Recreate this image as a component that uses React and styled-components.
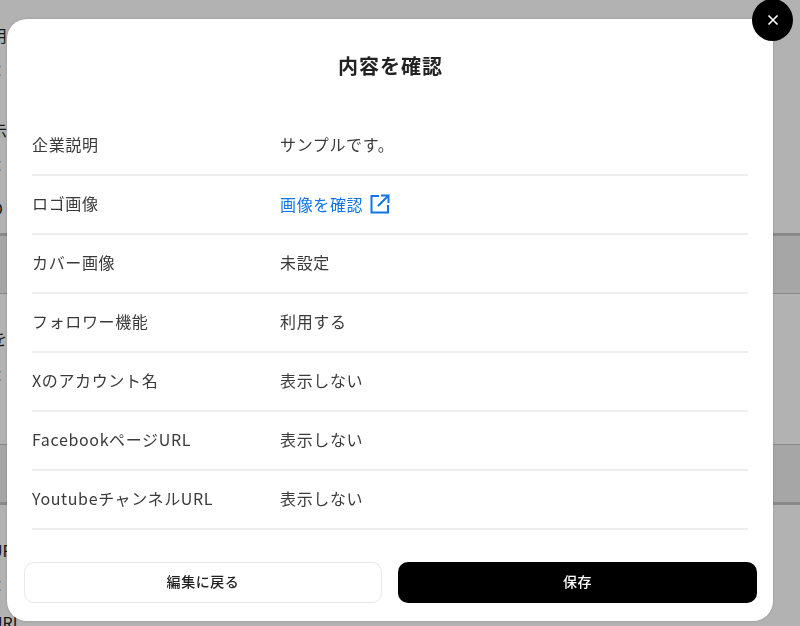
import React from "react";
import styled, { createGlobalStyle } from "styled-components";

const Global = createGlobalStyle`
  html, body { margin: 0; padding: 0; height: 100%; overflow: hidden; }
  body { background: #fff; font-family: "Noto Sans CJK JP", "Noto Sans", sans-serif; color: #333; }
`;

const Page = styled.div`
  height: 626px;
  overflow: hidden;
  display: flex;
  flex-direction: column;
`;
const PageRow = styled.div`
  flex: none;
  height: ${(p) => p.$h}px;
  display: flex;
  flex-direction: column;
  justify-content: ${(p) => (p.$pad ? "flex-start" : "center")};
  gap: 17px;
  padding-top: ${(p) => p.$pad ?? 0}px;
  font-size: 16px;
  line-height: 20px;
  background: ${(p) => (p.$band ? "#eeeeee" : "transparent")};
  border-top: ${(p) => p.$top ?? 0}px solid #c4c4c4;
  border-bottom: ${(p) => p.$bottom ?? 0}px solid #c4c4c4;
  box-sizing: border-box;
`;
const PageText = styled.span`
  margin-left: -9px;
  white-space: nowrap;
  color: #222;
`;

const Overlay = styled.div`
  position: fixed;
  inset: 0;
  background: rgba(0, 0, 0, 0.3);
`;
const Modal = styled.div`
  position: fixed;
  left: 7px;
  top: 19px;
  width: 766px;
  height: 602px;
  box-sizing: border-box;
  background: #fff;
  border-radius: 20px;
  box-shadow: 0 0 3px rgba(0, 0, 0, 0.18);
  display: flex;
  flex-direction: column;
  padding: 31px 16px 18px 17px;
`;
const Title = styled.h2`
  margin: 0;
  height: 32px;
  font-size: 20px;
  line-height: 32px;
  font-weight: 700;
  letter-spacing: 0.05em;
  color: #222;
  text-align: center;
`;
const List = styled.dl`
  margin: 35px 0 0;
  padding: 0 9px 0 8px;
  flex: 1;
`;
const Row = styled.div`
  height: 59px;
  box-sizing: border-box;
  display: flex;
  align-items: center;
  border-bottom: 2px solid #eeeeee;
  padding-bottom: 4px;
  font-size: 16px;
  line-height: 24px;
  letter-spacing: 0.04em;
  color: #3a3a3a;
`;
const Label = styled.dt`
  width: 248px;
  flex: none;
`;
const Value = styled.dd`
  margin: 0;
`;
const LinkValue = styled.a`
  display: inline-flex;
  align-items: center;
  gap: 7px;
  padding-top: 2px;
  color: #0f75e8;
  text-decoration: none;
`;
const Actions = styled.div`
  display: flex;
  gap: 16px;
`;
const Button = styled.button`
  flex: none;
  width: ${(p) => p.$w}px;
  height: 41px;
  box-sizing: border-box;
  border-radius: 10px;
  padding: 0 0 3px;
  font: 500 14px/20px "Noto Sans CJK JP", sans-serif;
  letter-spacing: 0.04em;
  border: ${(p) => (p.$primary ? "none" : "1px solid #e8e8e8")};
  background: ${(p) => (p.$primary ? "#000" : "#fff")};
  color: ${(p) => (p.$primary ? "#fff" : "#222")};
`;
const Close = styled.button`
  position: fixed;
  left: 752px;
  top: -1px;
  width: 41px;
  height: 42px;
  border: none;
  border-radius: 50%;
  background: #000;
  padding: 0;
  display: flex;
  align-items: center;
  justify-content: center;
`;

const rows = [
  ["企業説明", "サンプルです。"],
  ["ロゴ画像", null],
  ["カバー画像", "未設定"],
  ["フォロワー機能", "利用する"],
  ["Xのアカウント名", "表示しない"],
  ["FacebookページURL", "表示しない"],
  ["YoutubeチャンネルURL", "表示しない"],
];

export default function App() {
  return (
    <>
      <Global />
      <Page>
        <PageRow $h={25} />
        <PageRow $h={20}><PageText>用</PageText></PageRow>
        <PageRow $h={50}><PageText>：</PageText></PageRow>
        <PageRow $h={25} />
        <PageRow $h={20}><PageText>示</PageText></PageRow>
        <PageRow $h={50}><PageText>：</PageText></PageRow>
        <PageRow $h={36}><PageText>O</PageText></PageRow>
        <PageRow $h={7} />
        <PageRow $h={61} $band $top={3} $bottom={1} />
        <PageRow $h={150} $pad={34}>
          <PageText>を</PageText>
          <PageText>：</PageText>
        </PageRow>
        <PageRow $h={61} $band $top={1} $bottom={3} />
        <PageRow $h={35} />
        <PageRow $h={20}><PageText>URL</PageText></PageRow>
        <PageRow $h={15} />
        <PageRow $h={20}><PageText>：</PageText></PageRow>
        <PageRow $h={17} />
        <PageRow $h={20}><PageText>URL</PageText></PageRow>
      </Page>
      <Overlay />
      <Modal>
        <Title>内容を確認</Title>
        <List>
          {rows.map(([label, value]) => (
            <Row key={label}>
              <Label>{label}</Label>
              <Value>
                {value ?? (
                  <LinkValue href="#">
                    画像を確認
                    <svg width="20" height="20" viewBox="0 0 20 20" fill="none" stroke="#0f75e8" strokeWidth="2">
                      <path d="M9 2H1.5v16.5H18V11" />
                      <path d="M8 12L18.5 1.5M11 1.5h7.5V9" />
                    </svg>
                  </LinkValue>
                )}
              </Value>
            </Row>
          ))}
        </List>
        <Actions>
          <Button $w={358}>編集に戻る</Button>
          <Button $w={359} $primary>保存</Button>
        </Actions>
      </Modal>
      <Close aria-label="閉じる">
        <svg width="12" height="12" viewBox="0 0 12 12" stroke="#fff" strokeWidth="1.6" fill="none">
          <path d="M1.5 1.5l9 9M10.5 1.5l-9 9" />
        </svg>
      </Close>
    </>
  );
}
